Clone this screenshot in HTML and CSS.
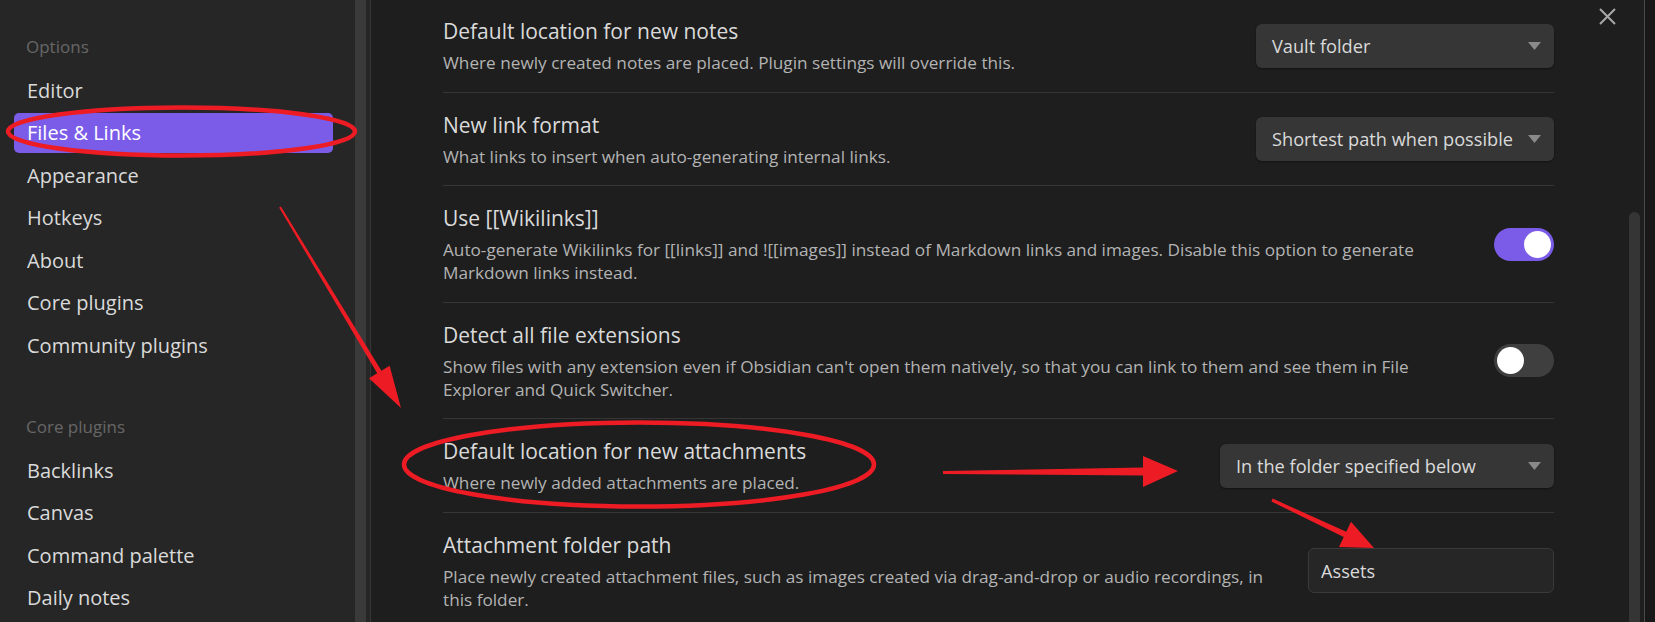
FILE: index.html
```html
<!DOCTYPE html>
<html lang="en">
<head>
<meta charset="utf-8">
<title>Settings – Files &amp; Links</title>
<link rel="stylesheet" href="styles.css">
</head>
<body>
<div class="app">
  <nav class="sidebar">
    <div class="nav-group">
      <div class="nav-header">Options</div>
      <div class="nav-list">
        <div class="nav-item">Editor</div>
        <div class="nav-item is-active">Files &amp; Links</div>
        <div class="nav-item">Appearance</div>
        <div class="nav-item">Hotkeys</div>
        <div class="nav-item">About</div>
        <div class="nav-item">Core plugins</div>
        <div class="nav-item">Community plugins</div>
      </div>
    </div>
    <div class="nav-group">
      <div class="nav-header">Core plugins</div>
      <div class="nav-list">
        <div class="nav-item">Backlinks</div>
        <div class="nav-item">Canvas</div>
        <div class="nav-item">Command palette</div>
        <div class="nav-item">Daily notes</div>
      </div>
    </div>
  </nav>
  <div class="sidebar-scroll"></div>
  <main class="content">
    <div class="settings">
      <div class="setting-item">
        <div class="setting-info">
          <div class="setting-name">Default location for new notes</div>
          <div class="setting-desc">Where newly created notes are placed. Plugin settings will override this.</div>
        </div>
        <div class="setting-control">
          <div class="dropdown"><span>Vault folder</span><svg viewBox="0 0 13 8"><path d="M0 0h13L6.5 8z"/></svg></div>
        </div>
      </div>
      <div class="setting-item">
        <div class="setting-info">
          <div class="setting-name">New link format</div>
          <div class="setting-desc">What links to insert when auto-generating internal links.</div>
        </div>
        <div class="setting-control">
          <div class="dropdown"><span>Shortest path when possible</span><svg viewBox="0 0 13 8"><path d="M0 0h13L6.5 8z"/></svg></div>
        </div>
      </div>
      <div class="setting-item">
        <div class="setting-info">
          <div class="setting-name">Use [[Wikilinks]]</div>
          <div class="setting-desc">Auto-generate Wikilinks for [[links]] and ![[images]] instead of Markdown links and images. Disable this option to generate Markdown links instead.</div>
        </div>
        <div class="setting-control">
          <div class="toggle is-on"><div class="toggle-knob"></div></div>
        </div>
      </div>
      <div class="setting-item">
        <div class="setting-info">
          <div class="setting-name">Detect all file extensions</div>
          <div class="setting-desc">Show files with any extension even if Obsidian can't open them natively, so that you can link to them and see them in File Explorer and Quick Switcher.</div>
        </div>
        <div class="setting-control">
          <div class="toggle"><div class="toggle-knob"></div></div>
        </div>
      </div>
      <div class="setting-item">
        <div class="setting-info">
          <div class="setting-name">Default location for new attachments</div>
          <div class="setting-desc">Where newly added attachments are placed.</div>
        </div>
        <div class="setting-control">
          <div class="dropdown dropdown--wide"><span>In the folder specified below</span><svg viewBox="0 0 13 8"><path d="M0 0h13L6.5 8z"/></svg></div>
        </div>
      </div>
      <div class="setting-item">
        <div class="setting-info">
          <div class="setting-name">Attachment folder path</div>
          <div class="setting-desc">Place newly created attachment files, such as images created via drag-and-drop or audio recordings, in this folder.</div>
        </div>
        <div class="setting-control">
          <input class="text-input" type="text" value="Assets">
        </div>
      </div>
    </div>
    <button class="close-btn" aria-label="Close"><svg viewBox="0 0 17 17"><path d="M1 1L16 16M16 1L1 16"/></svg></button>
    <div class="scroll-thumb"></div>
  </main>
  <div class="modal-edge"></div>
</div>
<svg class="annotations" viewBox="0 0 1655 622">
  <ellipse cx="181.5" cy="131.5" rx="173.5" ry="24"/>
  <ellipse cx="639" cy="464.5" rx="235" ry="42"/>
  <polygon points="280.9,206.5 381.4,370.7 389.6,365.8 401,408 369,378.2 377.2,373.3 279.1,207.5"/>
  <polygon points="943,471 1143,467.5 1143,456 1178,471 1143,487 1143,475.5 943,474"/>
  <polygon points="1272.6,498.6 1346.3,531.7 1351,521.7 1374,548 1339,547.1 1343.7,537.1 1271.4,501.4"/>
</svg>
</body>
</html>
```

FILE: styles.css
```css
* { box-sizing: border-box; margin: 0; padding: 0; }

html, body {
  width: 1655px;
  height: 622px;
  overflow: hidden;
}

body {
  position: relative;
  background: #262626;
  color: #dadada;
  font-family: "Open Sans", "Noto Sans", sans-serif;
}

.app {
  display: flex;
  height: 622px;
}

/* ---------- sidebar ---------- */
.sidebar {
  width: 355px;
  flex: none;
  background: #262626;
  padding: 35px 22px 0 14px;
}

.nav-group + .nav-group { margin-top: 50px; }

.nav-header {
  font-size: 17px;
  line-height: 24px;
  color: #666666;
  padding-left: 12px;
  margin-bottom: 11px;
}

.nav-list {
  display: flex;
  flex-direction: column;
  gap: 2.5px;
}

.nav-item {
  height: 40px;
  display: flex;
  align-items: center;
  padding: 0 13px;
  font-size: 20px;
  color: #dadada;
  border-radius: 5px;
  white-space: nowrap;
}

.nav-item.is-active {
  background: #7b5ce8;
  color: #ffffff;
}

.sidebar-scroll {
  width: 11px;
  flex: none;
  background: #3a3a3a;
  margin-right: 4px;
}

/* ---------- content ---------- */
.content {
  flex: 1;
  position: relative;
  background: #1e1e1e;
  border-left: 1px solid #363636;
  padding: 0 90px 0 72px;
  overflow: hidden;
}

.settings { margin-top: -1px; }

.setting-item {
  display: flex;
  align-items: center;
  padding: 18px 0 17.5px;
}

.setting-item + .setting-item { border-top: 1px solid #363636; }

.setting-info {
  flex: 1 1 auto;
  min-width: 0;
  margin-right: 22px;
}

.setting-name {
  font-size: 21px;
  line-height: 28px;
  color: #dadada;
}

.setting-desc {
  font-size: 17.2px;
  line-height: 23px;
  color: #b3b3b3;
  margin-top: 6px;
}

.setting-control {
  flex: none;
  display: flex;
  justify-content: flex-end;
}

.dropdown {
  width: 298px;
  height: 44px;
  display: flex;
  align-items: center;
  justify-content: space-between;
  padding: 0 13px 0 16px;
  background: #363636;
  border-radius: 6px;
  box-shadow: 0 1px 2px rgba(0, 0, 0, 0.4);
  font-size: 18.2px;
  color: #dadada;
  white-space: nowrap;
}

.dropdown--wide { width: 334px; }

.dropdown svg {
  width: 13px;
  height: 8px;
  fill: #8a8a8a;
  flex: none;
}

.toggle {
  width: 60px;
  height: 33px;
  border-radius: 17px;
  background: #3f3f3f;
  padding: 3px;
  display: flex;
}

.toggle.is-on {
  background: #7b5ce8;
  justify-content: flex-end;
}

.toggle-knob {
  width: 27px;
  height: 27px;
  border-radius: 50%;
  background: #ffffff;
}

.text-input {
  width: 246px;
  height: 45px;
  padding: 0 12px;
  background: #262626;
  border: 1px solid #3a3a3a;
  border-radius: 6px;
  font-family: "Open Sans", "Noto Sans", sans-serif;
  font-size: 18.2px;
  color: #dadada;
  outline: none;
}

.close-btn {
  position: absolute;
  top: 8px;
  right: 28px;
  width: 17px;
  height: 17px;
  background: none;
  border: none;
  display: block;
}

.close-btn svg {
  width: 17px;
  height: 17px;
  display: block;
  stroke: #a8a8a8;
  stroke-width: 2;
  fill: none;
}

.scroll-thumb {
  position: absolute;
  top: 212px;
  right: 4px;
  bottom: -20px;
  width: 11px;
  border-radius: 6px;
  background: #353535;
}

.modal-edge {
  width: 11px;
  flex: none;
  background: #181818;
  border-left: 1px solid #4a4a4a;
}

/* ---------- annotations ---------- */
.annotations {
  position: absolute;
  left: 0;
  top: 0;
  width: 1655px;
  height: 622px;
  pointer-events: none;
}

.annotations ellipse {
  fill: none;
  stroke: #ed1c24;
  stroke-width: 4.5;
}

.annotations polygon {
  fill: #ed1c24;
}
```
